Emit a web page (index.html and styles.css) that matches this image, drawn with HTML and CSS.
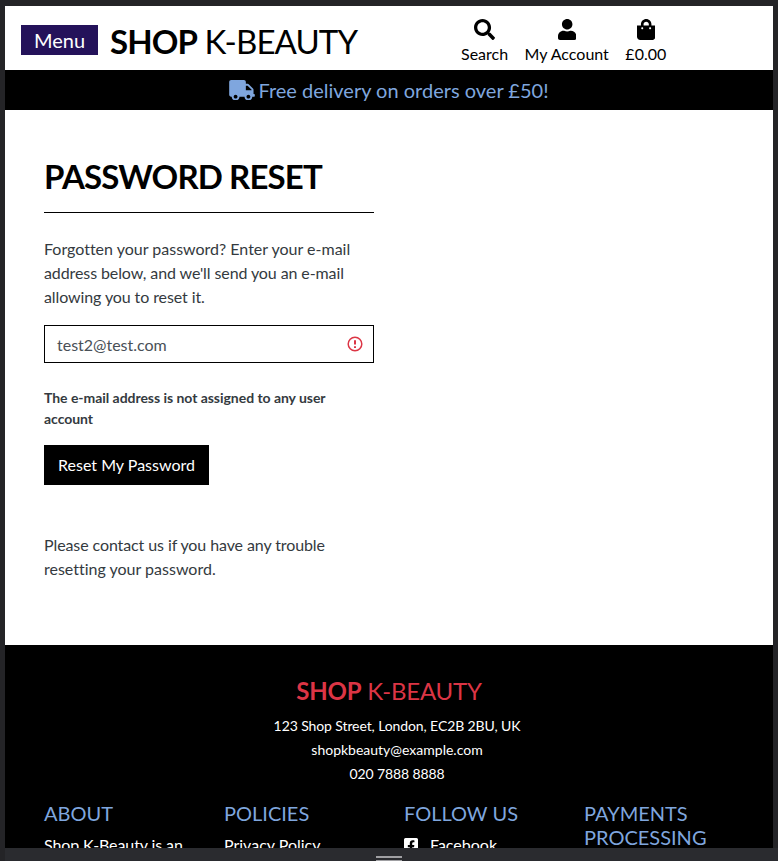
FILE: index.html
```html
<!DOCTYPE html>
<html lang="en">
<head>
<meta charset="utf-8">
<title>Shop K-Beauty - Password Reset</title>
<link rel="stylesheet" href="styles.css">
</head>
<body>
<div class="viewport">
  <header class="topbar">
    <button class="menu-btn" type="button">Menu</button>
    <a class="brand"><strong>SHOP</strong> K-BEAUTY</a>
    <nav class="actions">
      <a class="action"><svg class="ico" viewBox="0 0 512 512"><path d="M505 442.700L405.300 343c-4.500-4.500-10.600-7-17-7H372c27.600-35.300 44-79.700 44-128C416 93.100 322.900 0 208 0S0 93.100 0 208s93.100 208 208 208c48.300 0 92.700-16.400 128-44v16.300c0 6.400 2.500 12.500 7 17l99.700 99.700c9.400 9.400 24.600 9.400 33.900 0l28.300-28.300c9.400-9.400 9.400-24.600.1-34zM208 336c-70.700 0-128-57.200-128-128 0-70.700 57.200-128 128-128 70.700 0 128 57.200 128 128 0 70.700-57.200 128-128 128z"/></svg><span>Search</span></a>
      <a class="action"><svg class="ico" viewBox="0 0 448 512"><path d="M224 256c70.700 0 128-57.300 128-128S294.700 0 224 0 96 57.300 96 128s57.300 128 128 128zm89.600 32h-16.700c-22.200 10.200-46.900 16-72.900 16s-50.600-5.800-72.900-16h-16.700C60.200 288 0 348.200 0 422.400V464c0 26.500 21.500 48 48 48h352c26.500 0 48-21.500 48-48v-41.600c0-74.200-60.200-134.400-134.400-134.400z"/></svg><span>My Account</span></a>
      <a class="action"><svg class="ico" viewBox="0 0 448 512"><path d="M352 160v-32C352 57.420 294.579 0 224 0 153.420 0 96 57.420 96 128v32H0v272c0 44.183 35.817 80 80 80h288c44.183 0 80-35.817 80-80V160h-96zm-192-32c0-35.290 28.710-64 64-64s64 28.710 64 64v32H160v-32zm160 120c-13.255 0-24-10.745-24-24s10.745-24 24-24 24 10.745 24 24-10.745 24-24 24zm-192 0c-13.255 0-24-10.745-24-24s10.745-24 24-24 24 10.745 24 24-10.745 24-24 24z"/></svg><span>£0.00</span></a>
    </nav>
  </header>
  <div class="banner">
    <svg class="truck" viewBox="0 0 640 512"><path d="M624 352h-16V243.900c0-12.700-5.100-24.900-14.100-33.900L494 110.100c-9-9-21.200-14.100-33.900-14.100H416V48c0-26.500-21.500-48-48-48H48C21.500 0 0 21.500 0 48v320c0 26.500 21.500 48 48 48h16c0 53 43 96 96 96s96-43 96-96h128c0 53 43 96 96 96s96-43 96-96h48c8.800 0 16-7.200 16-16v-32c0-8.800-7.200-16-16-16zM160 464c-26.500 0-48-21.500-48-48s21.500-48 48-48 48 21.500 48 48-21.500 48-48 48zm320 0c-26.500 0-48-21.500-48-48s21.500-48 48-48 48 21.500 48 48-21.500 48-48 48zm80-208H416V144h44.100l99.900 99.900V256z"/></svg>
    <span>Free delivery on orders over £50!</span>
  </div>
  <main class="content">
    <h1>PASSWORD RESET</h1>
    <hr>
    <p class="intro">Forgotten your password? Enter your e-mail <span class="tight">address below, and we'll send you an e-mail allowing you to reset it.</span></p>
    <form>
      <div class="field">
        <span class="value">test2@test.com</span>
        <svg class="alert" viewBox="0 0 16 16"><circle cx="8" cy="8" r="6.800"/><path d="M8 4.300v4.200M8 10.300v1.700"/></svg>
      </div>
      <p class="error">The e-mail address is not assigned to any user account</p>
      <button class="submit" type="button">Reset My Password</button>
    </form>
    <p class="help"><span class="tight">Please contact us if you have any trouble</span> resetting your password.</p>
  </main>
  <footer class="footer">
    <div class="foot-brand"><strong>SHOP</strong> K-BEAUTY</div>
    <address>
      <div class="tight">123 Shop Street, London, EC2B 2BU, UK</div>
      <div>shopkbeauty@example.com</div>
      <div class="tight">020 7888 8888</div>
    </address>
    <div class="cols">
      <section><h2>ABOUT</h2><p class="tight">Shop K-Beauty is an</p></section>
      <section><h2>POLICIES</h2><p>Privacy Policy</p></section>
      <section><h2>FOLLOW US</h2><p class="social"><svg viewBox="0 0 448 512"><path d="M400 32H48A48 48 0 0 0 0 80v352a48 48 0 0 0 48 48h137.250V327.690h-63V256h63v-54.640c0-62.150 37-96.480 93.670-96.480 27.140 0 55.520 4.840 55.520 4.840v61h-31.270c-30.810 0-40.420 19.120-40.420 38.730V256h68.780l-11 71.690h-57.780V480H400a48 48 0 0 0 48-48V80a48 48 0 0 0-48-48z"/></svg><span>Facebook</span></p></section>
      <section><h2>PAYMENTS PROCESSING</h2></section>
    </div>
  </footer>
</div>
<div class="handle"><i></i><i></i></div>
</body>
</html>
```
FILE: styles.css
```css
* { box-sizing: border-box; }
body {
  margin: 0;
  height: 861px;
  padding: 6px 5px 0;
  overflow: hidden;
  background: #242427;
  font: 400 16px/24px Lato, "Liberation Sans", sans-serif;
  font-variant-ligatures: none;
  color: #343a40;
}
.tight { letter-spacing: -0.1px; }
.viewport { width: 768px; height: 842px; overflow: hidden; background: #fff; }
.topbar { display: flex; height: 64px; padding-left: 16px; color: #000; }
button { border: 0; margin: 0; font-family: inherit; color: #fff; }
.menu-btn {
  width: 77px; height: 30px; margin-top: 19px; padding: 0;
  background: #24125a; font-size: 20px; line-height: 30px;
}
.brand {
  width: 363px; padding: 11px 0 0 12px;
  font-size: 33px; line-height: 48px; letter-spacing: -0.9px; white-space: nowrap;
}
.actions { display: flex; gap: 16.500px; padding-top: 13px; }
.action { display: flex; flex-direction: column; align-items: center; }
.ico { height: 21px; width: auto; display: block; }
.action span { margin-top: 2px; }
.banner {
  display: flex; justify-content: center; align-items: center; gap: 3px;
  height: 40px; background: #000; color: #7fa6de; font-size: 20px; line-height: 40px;
}
svg { fill: currentColor; }
.truck { width: 26px; height: 20.500px; }
.content { width: 369px; height: 535px; padding: 46px 0 0 39px; }
h1 {
  margin: 0; color: #000; font-size: 33px; line-height: 40px;
  font-weight: 700; letter-spacing: -0.87px; white-space: nowrap;
}
hr { border: 0; height: 1px; margin: 16px 0 24px; background: #000; }
p { margin: 0; }
.field {
  display: flex; justify-content: space-between; align-items: center;
  height: 38px; margin-top: 16px; padding: 0 10px 0 12px;
  border: 1px solid #000; color: #495057;
}
.value { position: relative; top: 1px; }
.alert { width: 16px; height: 16px; fill: none; stroke: #dc3545; stroke-width: 1.500; }
.alert path { stroke-width: 2; }
.error { margin-top: 24px; font-size: 14px; line-height: 21px; font-weight: 700; letter-spacing: -0.04px; }
.submit { display: block; width: 165px; height: 40px; margin-top: 16px; padding: 0 0 2px; background: #000; font-size: 16px; }
.help { margin-top: 48px; }
.footer { height: 260px; padding: 31px 24px 0; background: #000; color: #fff; }
.foot-brand { color: #dc3545; font-size: 24px; line-height: 30px; letter-spacing: -0.2px; text-align: center; }
address { margin-top: 8px; padding-left: 16px; font-style: normal; font-size: 14px; text-align: center; }
.cols { display: grid; grid-template-columns: repeat(4, 180px); margin-top: 15px; }
section { padding: 0 15px; }
h2 { margin: 0 0 8px; color: #7fa6de; font-size: 20px; line-height: 24px; font-weight: 400; }
section p { white-space: nowrap; line-height: 24px; }
.social { display: flex; gap: 12px; }
.social svg { width: 14px; height: 16px; margin-top: 4px; }
.handle {
  display: flex; flex-direction: column; align-items: center; gap: 2px;
  height: 13px; margin: 0 -5px 0 0; padding: 8px 5px 0 0; background: #2a2b2f;
}
.handle i { width: 26px; height: 2px; flex: none; background: #a0a0a3; }
```
